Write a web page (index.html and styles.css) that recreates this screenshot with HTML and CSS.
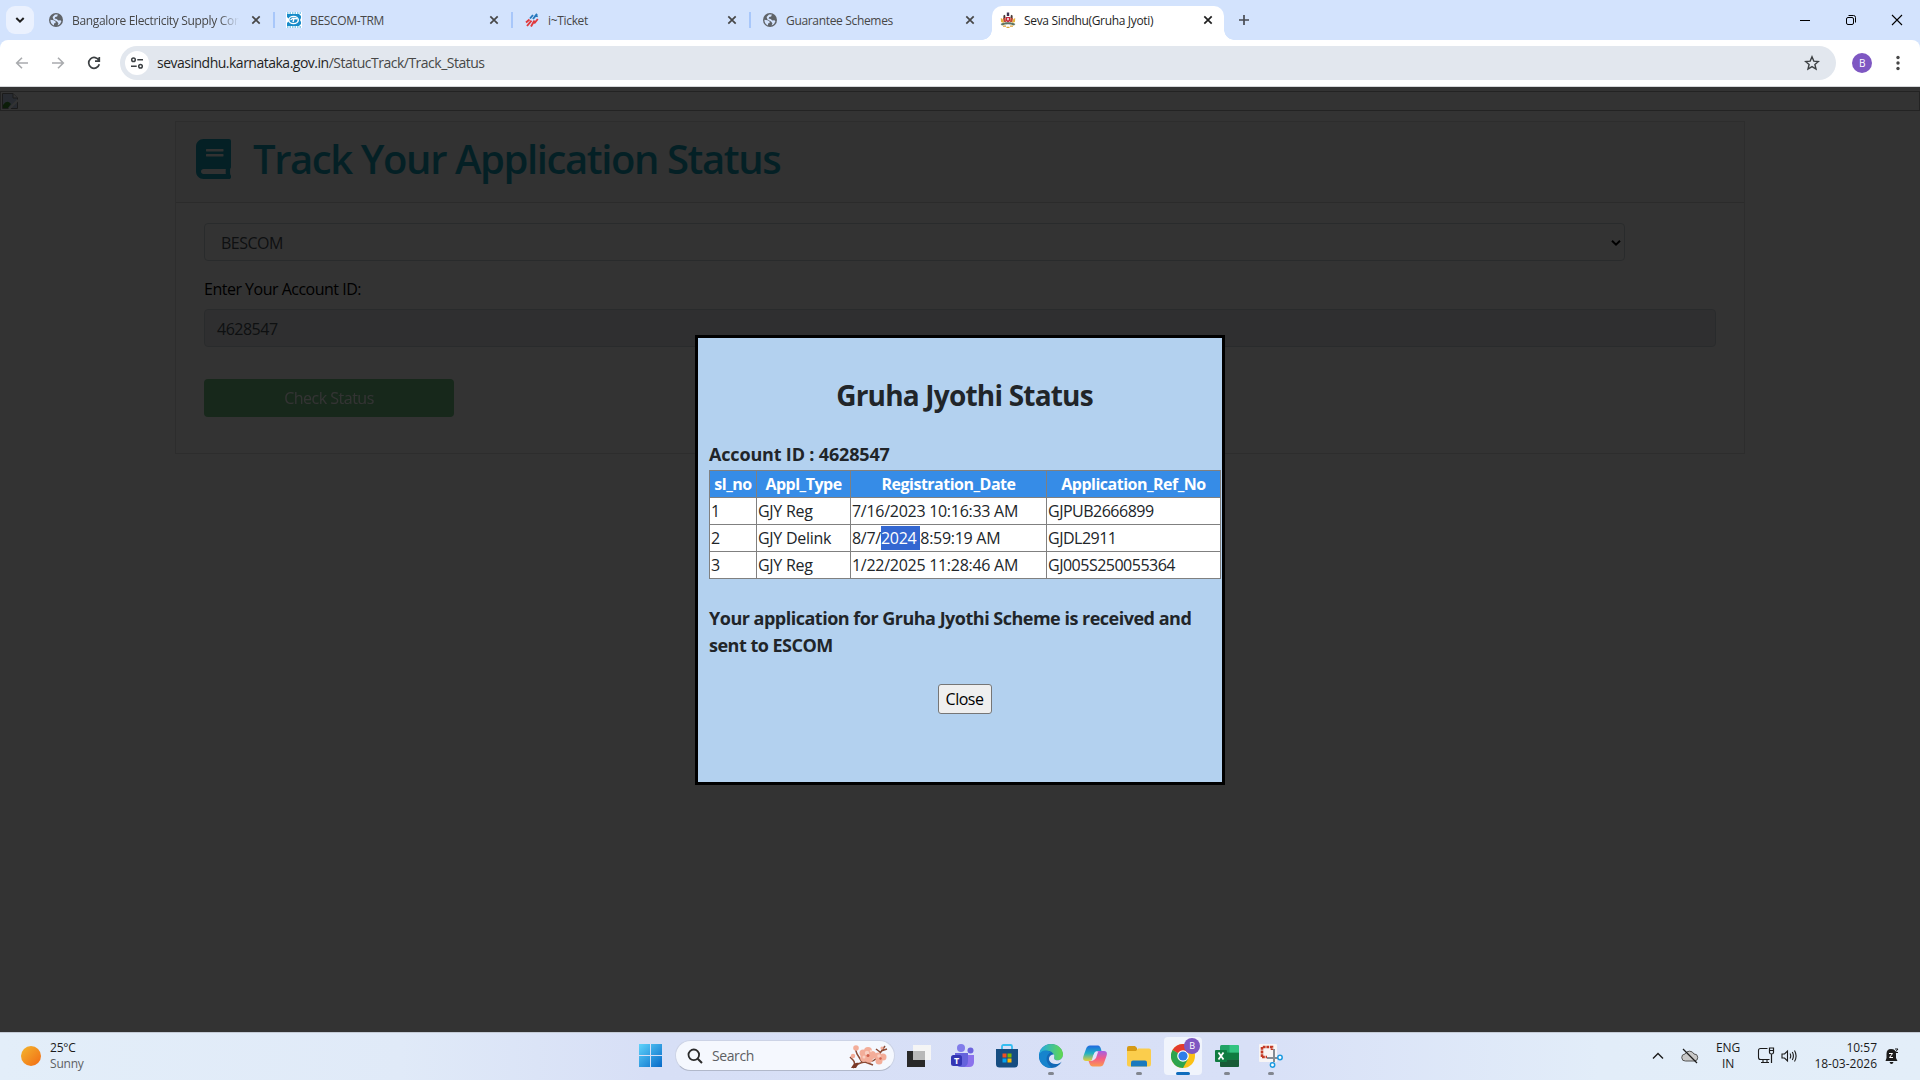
FILE: index.html
```html
<!DOCTYPE html>
<html lang="en">
<head>
    <meta charset="UTF-8">
    <meta name="viewport" content="width=device-width, initial-scale=1.0">
    <title>Seva Sindhu(Gruha Jyoti)</title>
    <link rel="stylesheet" href="styles.css">
</head>
<body>
    <!-- shared icons -->
    <svg class="defs" width="0" height="0">
        <symbol id="globe" viewBox="0 0 14 14">
            <circle cx="7" cy="7" r="7" fill="#5f6368"/>
            <path d="M1.4 6.8 4.6 7.2 6.6 8.6V10L5 10.6V12.4A6 6 0 0 1 1.4 6.8ZM6 1.4 8.8 1.5 8.2 3.4 6.2 4 5.6 5.6 7.6 6 9.4 7.4 11.4 7.2 12.4 8.2A5.7 5.7 0 0 1 8.6 12.4L9.4 10.2 8 8.6 4.4 6.4 3.6 4Z" fill="#d3e3fd"/>
        </symbol>
        <symbol id="cross" viewBox="0 0 10 10">
            <path d="M1.3 1.3 8.7 8.7M8.7 1.3 1.3 8.7" fill="none" stroke="currentColor" stroke-width="1.7"/>
        </symbol>
    </svg>

    <!-- tab strip -->
    <div class="tab-strip">
        <div class="tab-search">
            <svg width="10" height="8" viewBox="0 0 10 8"><path d="M1.3 2 5 5.7 8.7 2" fill="none" stroke="#1f1f1f" stroke-width="2"/></svg>
        </div>
        <div class="tab">
            <svg class="favicon" viewBox="-1 -1 16 16"><use href="#globe" width="14" height="14"/></svg>
            <span class="tab-title fade">Bangalore Electricity Supply Com</span>
            <svg class="tab-close"><use href="#cross"/></svg>
        </div>
        <div class="tab">
            <svg class="favicon" viewBox="0 0 16 16">
                <rect width="16" height="16" fill="#fff"/>
                <path d="M1 2H13L15 4V6L14 8L15 10V12L13 14H1V11L3 9V7L1 5Z" fill="#178bc9"/>
                <path d="M1 1H15M1 15H15" stroke="#69bce4" stroke-width="1.5" stroke-dasharray="1.5 1"/>
                <ellipse cx="7.5" cy="8" rx="5.5" ry="4.3" fill="#fff"/>
                <ellipse cx="7.5" cy="8" rx="4" ry="2.9" fill="#178bc9"/>
                <path d="M4.5 8 7 6.2 11 6.8M8 6.5 7 10" fill="none" stroke="#fff" stroke-width="1.4"/>
            </svg>
            <span class="tab-title">BESCOM-TRM</span>
            <svg class="tab-close"><use href="#cross"/></svg>
        </div>
        <div class="tab">
            <svg class="favicon" viewBox="0 0 16 16">
                <path d="M6 6.5 9 3M9 7 13 1.8M12.5 4.5 13.5 3.4" stroke="#2879bd" stroke-width="1.9"/>
                <path d="M2 10.5 5.5 7.5M3 14 7.5 8.6M7 14.5 10.5 8.6M10.2 11.5 13.8 7" stroke="#e0393c" stroke-width="1.9"/>
            </svg>
            <span class="tab-title">i~Ticket</span>
            <svg class="tab-close"><use href="#cross"/></svg>
        </div>
        <div class="tab no-line">
            <svg class="favicon" viewBox="-1 -1 16 16"><use href="#globe" width="14" height="14"/></svg>
            <span class="tab-title">Guarantee Schemes</span>
            <svg class="tab-close"><use href="#cross"/></svg>
        </div>
        <div class="tab active">
            <svg class="favicon" viewBox="0 0 16 16">
                <path d="M6.8 .5H9.2V4H6.8Z" fill="#3c3350"/>
                <path d="M3.4 3.5 5 2.8 5.6 6H3.4ZM12.600 3.5 11 2.8 10.400 6H12.600Z" fill="#4a3a35"/>
                <path d="M3 6H5.500L6 10H3.500ZM13 6H10.500L10 10H12.500Z" fill="#c04a30"/>
                <path d="M.8 6 2.600 7 4 11 1 10ZM15.200 6 13.400 7 12 11 15 10Z" fill="#e6b23c"/>
                <path d="M5.800 5H10.200V9L8 10.600 5.800 9Z" fill="#c5283d"/>
                <path d="M7.200 6H8.800V8.200H7.200Z" fill="#f3e9ea"/>
                <path d="M.6 12C4 9.800 12 9.800 15.400 12L14 13.400C10 12 6 12 2 13.400Z" fill="#5f7460"/>
                <path d="M3 14.200H6M10 14.200H13M6.500 15.400H9.500" stroke="#dba337" stroke-width="1.200"/>
            </svg>
            <span class="tab-title">Seva Sindhu(Gruha Jyoti)</span>
            <svg class="tab-close"><use href="#cross"/></svg>
        </div>
        <svg class="new-tab" viewBox="0 0 12 12"><path d="M6 1V11M1 6H11" stroke="#474b52" stroke-width="1.7"/></svg>
        <div class="window-buttons">
            <svg viewBox="0 0 12 12"><path d="M1 6.5H11" stroke="#000"/></svg>
            <svg viewBox="0 0 12 12"><rect x="1.5" y="3.5" width="7" height="7" rx="1.5" fill="none" stroke="#000"/><path d="M3.5 1.5H8.5A2 2 0 0 1 10.5 3.5V8.5" fill="none" stroke="#000"/></svg>
            <svg viewBox="0 0 12 12"><path d="M1 1 11 11M11 1 1 11" stroke="#000" stroke-width="1.1"/></svg>
        </div>
    </div>

    <!-- toolbar -->
    <div class="toolbar">
        <svg class="nav-icon" viewBox="0 0 16 16"><path d="M14 8H3M8 2.7 2.7 8 8 13.3" fill="none" stroke="#a9abae" stroke-width="1.6"/></svg>
        <svg class="nav-icon" viewBox="0 0 16 16"><path d="M2 8H13M8 2.7 13.3 8 8 13.3" fill="none" stroke="#a9abae" stroke-width="1.6"/></svg>
        <svg class="nav-icon" viewBox="0 0 16 16"><path d="M13 5.6A5.4 5.4 0 1 0 13.3 9.3M13.3 2V6.2H9" fill="none" stroke="#3c4043" stroke-width="1.7"/></svg>
        <div class="omnibox">
            <div class="site-info">
                <svg width="14" height="14" viewBox="0 0 14 14"><g fill="none" stroke="#3c4043" stroke-width="1.5"><circle cx="3.5" cy="3.8" r="1.8"/><circle cx="10.5" cy="10.2" r="1.8"/><path d="M7.3 3.8H13M1 10.2H6.7"/></g></svg>
            </div>
            <span class="url">sevasindhu.karnataka.gov.in<span class="path">/StatucTrack/Track_Status</span></span>
            <svg class="star" viewBox="0 0 16 16"><path d="M8 1.8 9.8 6.1 14.4 6.5 10.9 9.5 12 14 8 11.6 4 14 5.1 9.5 1.6 6.5 6.2 6.1Z" fill="none" stroke="#3c4043" stroke-width="1.4"/></svg>
        </div>
        <div class="profile">B</div>
        <svg class="dots" viewBox="0 0 4 16"><circle cx="2" cy="2.5" r="1.7"/><circle cx="2" cy="8" r="1.7"/><circle cx="2" cy="13.5" r="1.7"/></svg>
    </div>

    <!-- web page -->
    <div class="page">
        <div class="banner">
            <svg width="16" height="16" viewBox="0 0 16 16">
                <path d="M.5 .5H11L15.5 5V15.5H.5Z" fill="#c6d6f2" stroke="#888"/>
                <path d="M11 .5V5H15.5" fill="#fff" stroke="#888"/>
                <path d="M1 15V12Q5 6 9 11L6 15Z" fill="#3c9030"/>
                <path d="M7 16 16 7" stroke="#fff" stroke-width="2"/>
            </svg>
        </div>
        <div class="card">
            <div class="card-header">
                <svg class="book" viewBox="0 0 448 512"><path fill="currentColor" d="M448 360V24c0-13.300-10.700-24-24-24H96C43 0 0 43 0 96v320c0 53 43 96 96 96h328c13.300 0 24-10.700 24-24v-16c0-7.500-3.500-14.300-8.900-18.700-4.200-15.400-4.200-59.300 0-74.700 5.400-4.300 8.900-11.100 8.900-18.600zM128 134c0-3.300 2.700-6 6-6h212c3.300 0 6 2.700 6 6v20c0 3.300-2.700 6-6 6H134c-3.300 0-6-2.700-6-6v-20zm0 64c0-3.300 2.700-6 6-6h212c3.300 0 6 2.700 6 6v20c0 3.300-2.700 6-6 6H134c-3.300 0-6-2.700-6-6v-20zm253.400 250H96c-17.700 0-32-14.300-32-32 0-17.600 14.400-32 32-32h285.400c-1.900 17.100-1.900 46.900 0 64z"/></svg>
                <h1>Track Your Application Status</h1>
            </div>
            <div class="card-body">
                <div class="select">
                    <span>BESCOM</span>
                    <svg width="10" height="8" viewBox="0 0 10 8"><path d="M1 1.700 5 5.700 9 1.700" fill="none" stroke="#000" stroke-width="2"/></svg>
                </div>
                <label class="field-label">Enter Your Account ID:</label>
                <div class="input">4628547</div>
                <div class="check-button">Check Status</div>
            </div>
        </div>

        <div class="overlay">
            <div class="modal">
                <h2>Gruha Jyothi Status</h2>
                <p class="account">Account ID : 4628547</p>
                <table>
                    <colgroup><col class="c1"><col class="c2"><col class="c3"><col class="c4"></colgroup>
                    <tr><th>sl_no</th><th>Appl_Type</th><th>Registration_Date</th><th>Application_Ref_No</th></tr>
                    <tr><td>1</td><td>GJY Reg</td><td>7/16/2023 10:16:33 AM</td><td>GJPUB2666899</td></tr>
                    <tr><td>2</td><td>GJY Delink</td><td>8/7/<span class="selected">2024 </span>8:59:19 AM</td><td>GJDL2911</td></tr>
                    <tr><td>3</td><td>GJY Reg</td><td>1/22/2025 11:28:46 AM</td><td>GJ005S250055364</td></tr>
                </table>
                <p class="message">Your application for Gruha Jyothi Scheme is received and<br>sent to ESCOM</p>
                <button class="close-button">Close</button>
            </div>
        </div>
    </div>

    <!-- taskbar -->
    <div class="taskbar">
        <div class="weather">
            <div class="sun"></div>
            <div class="weather-text">25°C<br><span>Sunny</span></div>
        </div>
        <div class="apps">
            <svg class="start" viewBox="0 0 23 23">
                <defs><linearGradient id="win" x1="0" y1="0" x2="23" y2="23" gradientUnits="userSpaceOnUse"><stop stop-color="#5fd3fb"/><stop offset="1" stop-color="#0669c8"/></linearGradient></defs>
                <path d="M0 0H11V11H0ZM12 0H23V11H12ZM0 12H11V23H0ZM12 12H23V23H12Z" fill="url(#win)"/>
            </svg>
            <div class="search">
                <svg width="16" height="16" viewBox="0 0 16 16"><circle cx="6.800" cy="6.800" r="5.300" fill="none" stroke="#2b2b2b" stroke-width="1.800"/><path d="M10.700 10.700 15 15" stroke="#2b2b2b" stroke-width="2"/></svg>
                <span>Search</span>
                <svg class="blossom" viewBox="0 0 42 26">
                    <path d="M6 25Q9 20 6 17M6 25Q10 20 18 19 27 20 31 13L38 3M15 19 10 11 8 5M33 9 29 6M34 8 40 6M6 17 3 14M18 19 26 22" fill="none" stroke="#8a4a35" stroke-width="1.500"/>
                    <path d="M4 25Q7 19 12 20L9 25Z" fill="#7a3a28"/>
                    <g fill="#f3ad99"><circle cx="16" cy="10" r="3.500"/><circle cx="21" cy="8" r="4"/><circle cx="25" cy="12" r="4"/><circle cx="17" cy="15" r="3.800"/><circle cx="22" cy="16" r="3.800"/><circle cx="31" cy="13" r="3.500"/><circle cx="36" cy="14" r="3.500"/><circle cx="32" cy="18" r="3.500"/><circle cx="9" cy="5" r="2.800"/><circle cx="6" cy="13" r="2.200"/><circle cx="35" cy="5" r="1.600"/></g>
                    <g fill="#f9d0c2"><circle cx="20" cy="10" r="2.200"/><circle cx="17" cy="14" r="1.500"/><circle cx="32" cy="13" r="1.800"/><circle cx="24" cy="8" r="1.300"/></g>
                    <circle cx="21" cy="12.500" r="1.500" fill="#d0604c"/><circle cx="33.500" cy="15.500" r="1.200" fill="#d0604c"/>
                </svg>
            </div>
            <div class="app"><svg viewBox="0 0 24 24">
                <rect x="6" y="1" width="18" height="15" fill="#f5f5f5"/><rect y="7" width="18" height="16" fill="#292929"/><rect x="6" y="7" width="12" height="9" fill="#b9b9b9"/>
            </svg></div>
            <div class="app"><svg viewBox="0 0 24 24">
                <circle cx="10" cy="4" r="4" fill="#817cea"/><circle cx="19.500" cy="6.500" r="3" fill="#6c63dd"/>
                <path d="M14 11H23V18Q23 23 18 23H12Z" fill="#8b72ec"/><path d="M4 9H17V17Q17 23 11 23 4 23 4 17Z" fill="#6563dc"/>
                <rect y="11" width="11" height="11" rx="2.500" fill="#3436b4"/><text x="5.500" y="19.500" class="letter">T</text>
            </svg></div>
            <div class="app"><svg viewBox="0 0 24 24">
                <path d="M7 6V2.500Q7 1 8.500 1H15.500Q17 1 17 2.500V6" fill="none" stroke="#35bdf1" stroke-width="1.800"/>
                <path d="M1 5H23V20Q23 23.500 19.500 23.500H4.500Q1 23.500 1 20Z" fill="#164d81"/>
                <path d="M7.500 9.500H11.500V13.500H7.500Z" fill="#f25022"/><path d="M12.500 9.500H16.500V13.500H12.500Z" fill="#7fba00"/><path d="M7.500 14.500H11.500V18.500H7.500Z" fill="#00a4ef"/><path d="M12.500 14.500H16.500V18.500H12.500Z" fill="#ffb900"/>
            </svg></div>
            <div class="app open"><svg viewBox="0 0 24 24">
                <defs><linearGradient id="edge"><stop stop-color="#22a9e6"/><stop offset="1" stop-color="#62d94c"/></linearGradient></defs>
                <circle cx="12" cy="12" r="12" fill="#1369b7"/>
                <path d="M0 11C1 4 6 0 12 0 19 0 24 5 24 10.500 24 15 20 17 16.500 16 14 15 16 13.500 15 11 13 6 4 5 0 11Z" fill="url(#edge)"/>
                <path d="M15 10.500C10 10 8 16 12.500 19 16 21 20 20 22.500 18L24 17V10.500C24 15 20 17 16.500 16 14 15 16 13 15 10.500Z" fill="#dbe2f7"/>
                <path d="M0 12C1 6 8 5 12 8.500 7 10 5 18 13 23.900 5 24 0 19 0 12Z" fill="#1684cd"/>
            </svg></div>
            <div class="app"><svg viewBox="0 0 24 24">
                <defs><linearGradient id="cpa" x2="0" y2="1"><stop stop-color="#2068e0"/><stop offset=".5" stop-color="#20b1c4"/><stop offset="1" stop-color="#e9cf35"/></linearGradient><linearGradient id="cpb" x2="0" y2="1"><stop stop-color="#a45ee5"/><stop offset=".5" stop-color="#f45d85"/><stop offset="1" stop-color="#fa9a4f"/></linearGradient></defs>
                <path d="M7 1.500H15Q17 1.500 18 5L18.500 7H14Q12 7 11 10L9.500 15Q9 17 6 17H3Q-1 17 .5 12L3 5Q4 1.500 7 1.500Z" fill="url(#cpa)"/>
                <path d="M17 22.500H10Q7 22.500 6 18L5.500 17H8Q11 17 12 14L14 8Q14.500 7 17 7H21Q25 7 23.500 12L21 19Q20 22.500 17 22.500Z" fill="url(#cpb)"/>
                <path d="M10 12 12 8H15L13 14Q12 16 9 16Z" fill="#e3e5fb"/>
            </svg></div>
            <div class="app open"><svg viewBox="0 0 24 24">
                <path d="M0 4Q0 2 2 2H8L10 4V8H0Z" fill="#d69a15"/><path d="M0 7H9L11 4.500H22Q24 4.500 24 6.500V20Q24 22.500 22 22.500H2Q0 22.500 0 20.500Z" fill="#fbcd4c"/>
                <path d="M4 22.500V18.500Q4 16.500 6 16.500H18Q20 16.500 20 18.500V22.500Z" fill="#1979be"/>
            </svg></div>
            <div class="app open current"><svg viewBox="0 0 24 24">
                <circle cx="12" cy="12" r="12" fill="#fbc116"/><path d="M12 12 1.600 6A12 12 0 0 1 22.400 6Z" fill="#e33b2e"/><path d="M12 12 1.600 6A12 12 0 0 0 12 24L17 15Z" fill="#2da44e"/>
                <circle cx="12" cy="12" r="5.800" fill="#fff"/><circle cx="12" cy="12" r="4.600" fill="#2f7de9"/>
            </svg><div class="badge">B</div></div>
            <div class="app open"><svg viewBox="0 0 24 24">
                <rect x="5" y="1" width="19" height="22" rx="1.500" fill="#21a366"/><path d="M5 8.500H24V15.500H5Z" fill="#107c41"/><path d="M14.500 1H22.500Q24 1 24 2.500V8.500H14.500Z" fill="#33c481"/><path d="M5 15.500H24V21.500Q24 23 22.500 23H6.500Q5 23 5 21.500Z" fill="#185c37"/>
                <rect y="6" width="12" height="12" rx="1" fill="#107c41"/><path d="M3.500 8.500 8.500 15.500M8.500 8.500 3.500 15.500" stroke="#fff" stroke-width="1.800"/>
            </svg></div>
            <div class="app open"><svg viewBox="0 0 24 24">
                <rect width="18" height="18" rx="1" fill="#f7f5f5"/><path d="M3 13V3H13V6" fill="none" stroke="#c43a25" stroke-width="2.600" stroke-dasharray="2.800 .8"/><path d="M3 13H8" stroke="#c43a25" stroke-width="2.600" stroke-dasharray="2.800 .8"/>
                <path d="M15 5V18M8 14H20" stroke="#858c93" stroke-width="2"/><circle cx="21" cy="13.500" r="2.200" fill="#fff" stroke="#1b9ae0" stroke-width="1.500"/><circle cx="13.500" cy="21" r="2.200" fill="#fff" stroke="#1b9ae0" stroke-width="1.500"/>
            </svg></div>
        </div>
        <div class="tray">
            <svg class="chevron" viewBox="0 0 12 8"><path d="M1 6.500 6 1.500 11 6.500" fill="none" stroke="#1b1b1b" stroke-width="1.400"/></svg>
            <svg class="cloud" viewBox="0 0 18 16"><path d="M4.500 13A3.500 3.500 0 0 1 4 6 5 5 0 0 1 13 6 3.500 3.500 0 0 1 13.500 13Z" fill="#c8c8c8" stroke="#555"/><path d="M2 1 16 15" stroke="#1b1b1b" stroke-width="1.300"/></svg>
            <div class="lang">ENG<br>IN</div>
            <svg class="network" viewBox="0 0 18 17"><path d="M10.500 1.500H3.500Q1.500 1.500 1.500 3.500V10.500Q1.500 12.500 3.500 12.500H12.500M6 12.500V15.500M10 12.500V15.500M4 15.500H12" fill="none" stroke="#1b1b1b" stroke-width="1.100"/><path d="M12.500 1H16.500V5.500Q16.500 7 14.500 7 12.500 7 12.500 5.500ZM12.500 3.500H16.500M14.500 7V16" fill="none" stroke="#1b1b1b" stroke-width="1.200"/></svg>
            <svg class="speaker" viewBox="0 0 17 14"><path d="M1 5H3.500L6.500 2V12L3.500 9H1ZM9 4.500Q10.500 7 9 9.500M11.300 3Q13.500 7 11.300 11M13.500 1.500Q16.700 7 13.500 12.500" fill="none" stroke="#1b1b1b" stroke-width="1.100"/></svg>
            <div class="clock">10:57<br>18-03-2026</div>
            <svg class="bell" viewBox="0 0 14 16"><path d="M6 1Q11 1 11 6V10L12.500 13H.5L1.500 10V6Q1.500 1 6 1ZM4.500 14H8.500Q8 16 6.500 16 5 16 4.500 14Z" fill="#1b1b1b"/><path d="M4 5.500H7.500L4.500 9.500H8" fill="none" stroke="#fff"/><path d="M10 1H13L10 4.500H13" fill="none" stroke="#1b1b1b"/></svg>
        </div>
    </div>
</body>
</html>
```
FILE: styles.css
```css
* {
    box-sizing: border-box;
}

body {
    margin: 0;
    width: 1920px;
    height: 1080px;
    overflow: hidden;
    display: flex;
    flex-direction: column;
    background: #d3e3fd;
    font-family: "Open Sans", "Noto Sans", sans-serif;
    font-size: 16px;
    line-height: 24px;
    letter-spacing: -0.5px;
    color: #212529;
}

svg {
    display: block;
    flex: none;
}

.defs {
    position: absolute;
}

/* tab strip */
.tab-strip {
    display: flex;
    align-items: center;
    height: 40px;
    flex: none;
    padding-left: 6px;
    font-size: 12px;
    letter-spacing: -0.33px;
}

.tab-search {
    display: flex;
    align-items: center;
    justify-content: center;
    width: 28px;
    height: 28px;
    margin-right: 3px;
    border-radius: 9px;
    background: #eaf1fe;
}

.tab {
    display: flex;
    align-items: center;
    width: 238px;
    height: 40px;
    padding: 0 14px 0 11px;
    background: linear-gradient(#a8c7fa, #a8c7fa) right center / 2px 16px no-repeat;
    color: #474747;
}

.tab.no-line {
    background: none;
}

.tab.active {
    position: relative;
    width: 232px;
    height: 34px;
    margin: 6px 3px 0 3px;
    padding: 0 11px 6px 8px;
    border-radius: 10px 10px 0 0;
    background: #fff;
    color: #1f1f1f;
}

.tab.active::before,
.tab.active::after {
    content: "";
    position: absolute;
    bottom: 0;
    left: -10px;
    width: 10px;
    height: 10px;
    background: radial-gradient(circle at 0 0, transparent 9.5px, #fff 10px);
}

.tab.active::after {
    left: auto;
    right: -10px;
    background: radial-gradient(circle at 100% 0, transparent 9.5px, #fff 10px);
}

.favicon {
    width: 16px;
    height: 16px;
    margin-right: 8px;
}

.tab-title {
    flex: 1;
    overflow: hidden;
    white-space: nowrap;
    margin-right: 12px;
    padding-top: 2px;
}

.fade {
    -webkit-mask-image: linear-gradient(to right, #000 88%, transparent);
    mask-image: linear-gradient(to right, #000 88%, transparent);
}

.tab-close {
    width: 10px;
    height: 10px;
}

.new-tab {
    width: 12px;
    height: 12px;
    margin-left: 11px;
}

.window-buttons {
    display: flex;
    gap: 34px;
    margin-left: auto;
    padding-right: 17px;
}

.window-buttons svg {
    width: 12px;
    height: 12px;
}

/* toolbar */
.toolbar {
    display: flex;
    align-items: center;
    height: 47px;
    flex: none;
    padding: 0 20px 1px 14px;
    border-bottom: 1px solid #d5d7da;
    border-radius: 8px 8px 0 0;
    background: #fff;
}

.nav-icon {
    width: 16px;
    height: 16px;
    margin-right: 20px;
}

.omnibox {
    display: flex;
    align-items: center;
    width: 1716px;
    height: 34px;
    margin-left: -2px;
    padding: 0 16px 0 5px;
    border-radius: 17px;
    background: #e2e7ee;
}

.site-info {
    display: flex;
    align-items: center;
    justify-content: center;
    width: 24px;
    height: 24px;
    margin-right: 8px;
    border-radius: 50%;
    background: #fff;
}

.url {
    flex: 1;
    font-size: 14px;
    letter-spacing: -0.5px;
    color: #1f1f1f;
}

.path {
    color: #474747;
}

.star {
    width: 16px;
    height: 16px;
}

.profile {
    width: 20px;
    height: 20px;
    margin-left: 16px;
    border-radius: 50%;
    background: #7e57c2;
    color: #fff;
    font-size: 10px;
    line-height: 20px;
    text-align: center;
}

.dots {
    width: 4px;
    height: 16px;
    margin-left: 24px;
    fill: #474747;
}

/* web page */
.page {
    position: relative;
    height: 945px;
    flex: none;
    padding-top: 4px;
    background: #fff;
}

.banner {
    height: 20px;
    padding: 1px;
    border: 1px solid #b0b0b0;
}

.card {
    width: 1570px;
    height: 333px;
    margin: 10px auto 0;
    border: 1px solid rgba(0, 0, 0, 0.125);
}

.card-header {
    display: flex;
    align-items: center;
    height: 81px;
    padding: 0 0 6px 20px;
    border-bottom: 1px solid rgba(0, 0, 0, 0.125);
    background: rgba(0, 0, 0, 0.03);
    color: #17a2b8;
}

.book {
    width: 35px;
    height: 40px;
    margin-right: 22px;
}

.card-header h1 {
    margin: 0;
    font-size: 40px;
    line-height: 48px;
    font-weight: 600;
    letter-spacing: -1.4px;
}

.card-body {
    padding: 20px 28px;
}

.select,
.input {
    display: flex;
    align-items: center;
    height: 38px;
    padding-top: 2px;
    border: 1px solid #ced4da;
    border-radius: 4px;
    color: #495057;
}

.select {
    justify-content: space-between;
    width: 1421px;
    padding-left: 16px;
    padding-right: 3px;
}

.field-label {
    display: block;
    margin: 16px 0 8px;
    color: #000;
}

.input {
    width: 1512px;
    padding-left: 12px;
    background: #e9ecef;
}

.check-button {
    width: 250px;
    height: 38px;
    margin-top: 32px;
    border-radius: 4px;
    background: #28a745;
    opacity: 0.65;
    color: #fff;
    line-height: 38px;
    text-align: center;
}

.overlay {
    position: absolute;
    inset: 0;
    padding-top: 248px;
    background: rgba(0, 0, 0, 0.8);
}

.modal {
    display: flex;
    flex-direction: column;
    width: 530px;
    height: 450px;
    margin: 0 auto;
    padding: 0 2px 0 11px;
    border: 3px solid #000;
    background: #b3d1ef;
}

.modal h2 {
    margin: 40px 0 29px;
    font-size: 28px;
    line-height: 34px;
    text-align: center;
    letter-spacing: -0.8px;
}

.account,
.message {
    margin: 0;
    font-size: 18px;
    line-height: 27px;
    font-weight: bold;
    letter-spacing: -0.5px;
}

.account {
    letter-spacing: -0.17px;
}

table {
    width: 512px;
    margin-top: 2px;
    table-layout: fixed;
    border-collapse: collapse;
    background: #fff;
}

.c1 {
    width: 47px;
}

.c2 {
    width: 94px;
}

.c3 {
    width: 196px;
}

.c4 {
    width: 174px;
}

th,
td {
    height: 27px;
    padding: 1px;
    border: 1px solid #808080;
    white-space: nowrap;
    letter-spacing: -0.28px;
}

th {
    background: #368ce7;
    color: #fff;
    letter-spacing: -0.5px;
}

td:last-child {
    letter-spacing: -0.5px;
}

.selected {
    display: inline-block;
    white-space: pre;
    background: #3367d1;
    color: #fff;
}

.message {
    margin-top: 26px;
}

.close-button {
    align-self: center;
    width: 54px;
    height: 30px;
    margin-top: 25px;
    padding: 0;
    border: 1px solid #767676;
    border-radius: 3px;
    background: #efefef;
    color: #000;
    font: inherit;
    letter-spacing: inherit;
}

/* taskbar */
.taskbar {
    display: flex;
    align-items: center;
    height: 48px;
    flex: none;
    padding-bottom: 2px;
    border-top: 1px solid #c4cbd6;
    background: linear-gradient(to right, #e3eef9 0, #e0eaf8 400px, #d7dff6 650px, #d8e0f7 1250px, #e2edf9 1600px, #e3eef9);
    font-size: 12px;
    line-height: 16px;
    letter-spacing: -0.2px;
    color: #1b1b1b;
}

.weather {
    display: flex;
    align-items: center;
    width: 639px;
    padding-left: 21px;
}

.sun {
    width: 20px;
    height: 20px;
    margin-right: 9px;
    border-radius: 50%;
    background: linear-gradient(135deg, #f3b72e, #f26a14);
}

.weather-text span {
    color: #5d5f63;
}

.apps {
    display: flex;
    align-items: center;
}

.start {
    width: 23px;
    height: 23px;
    margin-right: 13px;
}

.search {
    display: flex;
    align-items: center;
    width: 220px;
    height: 31px;
    margin-right: 5px;
    padding: 0 5px 0 11px;
    border: 1px solid #ccd3e6;
    border-bottom-color: #b1b8ca;
    border-radius: 16px;
    background: #f5f8fe;
    color: #5d5f63;
    font-size: 14px;
    letter-spacing: -0.4px;
}

.search span {
    margin-left: 9px;
}

.blossom {
    width: 42px;
    height: 26px;
    margin-left: auto;
}

.app {
    position: relative;
    display: flex;
    align-items: center;
    justify-content: center;
    width: 38px;
    height: 38px;
    margin-right: 6px;
    border-radius: 4px;
}

.app svg {
    width: 24px;
    height: 24px;
}

.app.open::after {
    content: "";
    position: absolute;
    left: 16px;
    bottom: 0;
    width: 6px;
    height: 3px;
    border-radius: 2px;
    background: #82868f;
}

.app.current {
    background: #f0f4fc;
}

.app.current::after {
    left: 12px;
    width: 14px;
    background: #0f6cbd;
}

.badge {
    position: absolute;
    left: 20px;
    top: 1px;
    width: 16px;
    height: 16px;
    border-radius: 50%;
    background: #7e57c2;
    color: #fff;
    font-size: 9px;
    text-align: center;
}

.letter {
    fill: #fff;
    font-size: 9px;
    font-weight: bold;
    text-anchor: middle;
}

.tray {
    display: flex;
    align-items: center;
    margin-left: auto;
    padding-right: 21px;
}

.chevron {
    width: 12px;
    height: 8px;
    margin-right: 17px;
}

.cloud {
    width: 18px;
    height: 16px;
    margin-right: 17px;
}

.lang {
    width: 24px;
    margin-right: 17px;
    text-align: center;
}

.network {
    width: 18px;
    height: 17px;
    margin-right: 6px;
}

.speaker {
    width: 17px;
    height: 14px;
    margin-right: 14px;
}

.clock {
    width: 65px;
    margin-right: 8px;
    text-align: right;
    letter-spacing: 0;
}

.bell {
    width: 14px;
    height: 16px;
}
```
